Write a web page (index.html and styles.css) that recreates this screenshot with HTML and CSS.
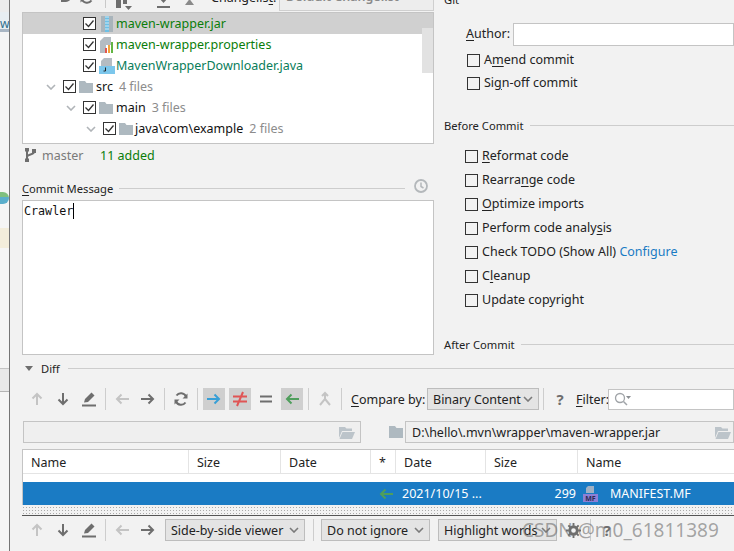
FILE: index.html
```html
<!DOCTYPE html>
<html lang="en">
<head>
    <meta charset="UTF-8">
    <meta name="viewport" content="width=device-width, initial-scale=1.0">
    <title>Commit Changes</title>
    <link rel="stylesheet" href="styles.css">
</head>
<body>
    <svg class="sprite">
        <symbol id="i-up" viewBox="0 0 16 16"><path d="M8 14V3M3.500 7.500 8 3l4.500 4.500" fill="none" stroke="currentColor" stroke-width="2"/></symbol>
        <symbol id="i-down" viewBox="0 0 16 16"><path d="M8 2v11M3.500 8.500 8 13l4.500-4.500" fill="none" stroke="currentColor" stroke-width="2"/></symbol>
        <symbol id="i-left" viewBox="0 0 16 16"><path d="M15 8H3M7.500 3.500 3 8l4.500 4.500" fill="none" stroke="currentColor" stroke-width="2"/></symbol>
        <symbol id="i-right" viewBox="0 0 16 16"><path d="M1 8h12M8.500 3.500 13 8l-4.500 4.500" fill="none" stroke="currentColor" stroke-width="2"/></symbol>
        <symbol id="i-edit" viewBox="0 0 16 16"><path d="M1 14.500h14" stroke="currentColor" stroke-width="2"/><path d="M3 11.500l1-3.500L10.500 1.500 13.500 4.500 7 11z" fill="currentColor"/></symbol>
        <symbol id="i-sync" viewBox="0 0 16 16"><path d="M13 5.500A5.500 5.500 0 0 0 3.500 4.500M3 10.500A5.500 5.500 0 0 0 12.500 11.500" fill="none" stroke="currentColor" stroke-width="2"/><path d="M14.500 7.500h-5l5-5zM1.500 8.500h5l-5 5z" fill="currentColor"/></symbol>
        <symbol id="i-merge" viewBox="0 0 16 16"><path d="M8 2v6L3 14M8 8l5 6M5 5l3-3 3 3" fill="none" stroke="currentColor" stroke-width="2"/></symbol>
        <symbol id="i-folder" viewBox="0 0 14 12"><path d="M0 0h6l1.500 2H14v10H0z" fill="currentColor"/></symbol>
        <symbol id="i-open" viewBox="0 0 16 13"><path d="M0 1h6l1.500 1.500H13V5H3L0 12z" fill="currentColor"/><path d="M3.500 6H16l-3 7H0.500z" fill="currentColor"/></symbol>
        <symbol id="i-chev" viewBox="0 0 10 6"><path d="M1 1l4 4 4-4" fill="none" stroke="currentColor" stroke-width="1.600"/></symbol>
        <symbol id="i-check" viewBox="0 0 13 13"><path d="M2.500 6.500l3 3 5-6" fill="none" stroke="#333" stroke-width="1.300"/></symbol>
    </svg>

    <div class="desktop">
        <div class="back-window">
            <div class="back-a"></div>
            <div class="back-tab">wr</div>
            <div class="back-b"></div>
            <div class="back-logo"></div>
            <div class="back-c"></div>
            <div class="back-note"></div>
            <div class="back-d"></div>
        </div>

        <div class="dialog">
            <div class="top-area">
                <div class="left-pane">
                    <div class="top-toolbar">
                        <svg class="top-icon blue" viewBox="0 0 16 16"><path d="M0 0h8v-4l8 8-6 6V8H0z" fill="currentColor" transform="translate(0 -2)"/></svg>
                        <svg class="top-icon undo" viewBox="0 0 16 16"><path d="M3 4h6a4 4 0 0 1 0 8H4" fill="none" stroke="currentColor" stroke-width="2"/></svg>
                        <svg class="top-icon redo" viewBox="0 0 16 16"><use href="#i-sync"/></svg>
                        <span class="top-sep"></span>
                        <svg class="top-icon group" viewBox="0 0 16 16"><path d="M0 0h5v9H0zM7 0h4v5H7zM9 7h7l-3.500 4z" fill="currentColor"/></svg>
                        <svg class="top-icon down" viewBox="0 0 16 16"><path d="M1 14h13" stroke="currentColor" stroke-width="2"/><path d="M3 5h9l-4.500 5z" fill="currentColor"/></svg>
                        <svg class="top-icon up" viewBox="0 0 16 16"><path d="M3 14h9L7.500 8z" fill="currentColor"/></svg>
                        <span class="changelist-label">Changelis<u>t</u>:</span>
                        <span class="changelist-combo">Default Changelist</span>
                    </div>

                    <div class="tree">
                        <div class="tree-row selected indent-file">
                            <span class="check on"><svg><use href="#i-check"/></svg></span>
                            <svg class="file-icon" viewBox="0 0 12 16"><rect width="12" height="16" fill="#a9b4bb"/><rect x="4" width="4" height="16" fill="#6cc0e6"/><path d="M4 1h4M4 4h4M4 7h4M4 10h4M4 13h4" stroke="#d5e7f0"/></svg>
                            <span class="added">maven-wrapper.jar</span>
                        </div>
                        <div class="tree-row indent-file">
                            <span class="check on"><svg><use href="#i-check"/></svg></span>
                            <svg class="file-icon" viewBox="0 0 14 16"><path d="M4 0h7v8H6v8H0V4z" fill="#b4bcc2"/><rect x="5" y="11" width="2" height="5" fill="#e2574c"/><rect x="8" y="8" width="2" height="8" fill="#f2a33c"/><rect x="11" y="5" width="2" height="11" fill="#62b543"/></svg>
                            <span class="added">maven-wrapper.properties</span>
                        </div>
                        <div class="tree-row indent-file">
                            <span class="check on"><svg><use href="#i-check"/></svg></span>
                            <svg class="file-icon java" viewBox="0 0 16 16"><path d="M5 0h8v8H2V3z" fill="#b4bcc2"/><rect y="8" width="16" height="8" fill="#7cc7ec"/><path d="M6.500 9.500v3.500H4.500" fill="none" stroke="#222"/></svg>
                            <span class="added-java">MavenWrapperDownloader.java</span>
                        </div>
                        <div class="tree-row indent-src">
                            <svg class="chev"><use href="#i-chev"/></svg>
                            <span class="check on"><svg><use href="#i-check"/></svg></span>
                            <svg class="folder"><use href="#i-folder"/></svg>
                            <span class="dir">src</span><span class="count">4 files</span>
                        </div>
                        <div class="tree-row indent-main">
                            <svg class="chev"><use href="#i-chev"/></svg>
                            <span class="check on"><svg><use href="#i-check"/></svg></span>
                            <svg class="folder"><use href="#i-folder"/></svg>
                            <span class="dir">main</span><span class="count">3 files</span>
                        </div>
                        <div class="tree-row indent-java">
                            <svg class="chev"><use href="#i-chev"/></svg>
                            <span class="check on"><svg><use href="#i-check"/></svg></span>
                            <svg class="folder"><use href="#i-folder"/></svg>
                            <span class="dir tight">java\com\example</span><span class="count">2 files</span>
                        </div>
                        <div class="tree-row indent-last">
                            <span class="check on"></span>
                        </div>
                        <div class="tree-thumb"></div>
                    </div>

                    <div class="status-row">
                        <svg class="branch" viewBox="0 0 11 14"><path d="M2 1v12M9 4c0 3-7 2-7 5" fill="none" stroke="#6e6e6e" stroke-width="2"/><rect x="0" y="0" width="4" height="3.500" fill="#6e6e6e"/><rect x="0" y="10.500" width="4" height="3.500" fill="#6e6e6e"/><rect x="7" y="1" width="4" height="4" fill="#6e6e6e"/></svg>
                        <span class="branch-name">master</span>
                        <span class="added-count">11 added</span>
                    </div>

                    <div class="message-head">
                        <span class="message-label"><u>C</u>ommit Message</span>
                        <span class="rule"></span>
                        <svg class="clock" viewBox="0 0 14 14"><circle cx="7" cy="7" r="6" fill="none" stroke="#b4b8bb" stroke-width="1.800"/><path d="M7 3.500V7.500l2.500 1.500" fill="none" stroke="#b4b8bb" stroke-width="1.500"/></svg>
                    </div>
                    <div class="message-box"><span class="message-text">Crawler</span><span class="caret"></span></div>
                </div>

                <div class="right-pane">
                    <div class="git-head">Git</div>
                    <div class="author-row">
                        <span class="author-label"><u>A</u>uthor:</span>
                        <span class="author-input"></span>
                    </div>
                    <label class="opt opt-git"><span class="check"></span><span>A<u>m</u>end commit</span></label>
                    <label class="opt opt-git"><span class="check"></span><span>Si<u>g</u>n-off commit</span></label>

                    <div class="section-head before"><span>Before Commit</span><span class="rule"></span></div>
                    <label class="opt"><span class="check"></span><span><u>R</u>eformat code</span></label>
                    <label class="opt"><span class="check"></span><span>Rearra<u>n</u>ge code</span></label>
                    <label class="opt"><span class="check"></span><span><u>O</u>ptimize imports</span></label>
                    <label class="opt"><span class="check"></span><span>Perform code analy<u>s</u>is</span></label>
                    <label class="opt"><span class="check"></span><span>Check TODO (Show All) <a class="link">Configure</a></span></label>
                    <label class="opt"><span class="check"></span><span>C<u>l</u>eanup</span></label>
                    <label class="opt"><span class="check"></span><span>Update copyright</span></label>

                    <div class="section-head after"><span>After Commit</span><span class="rule"></span></div>
                </div>
            </div>

            <div class="diff-head">
                <span class="triangle"></span>
                <span>Diff</span>
                <span class="rule"></span>
            </div>

            <div class="toolbar diff-toolbar">
                <span class="tool dim"><svg><use href="#i-up"/></svg></span>
                <span class="tool"><svg><use href="#i-down"/></svg></span>
                <span class="tool"><svg><use href="#i-edit"/></svg></span>
                <span class="sep"></span>
                <span class="tool dim"><svg><use href="#i-left"/></svg></span>
                <span class="tool"><svg><use href="#i-right"/></svg></span>
                <span class="sep"></span>
                <span class="tool"><svg><use href="#i-sync"/></svg></span>
                <span class="sep"></span>
                <span class="tool on c-blue"><svg><use href="#i-right"/></svg></span>
                <span class="tool on c-red"><svg viewBox="0 0 16 16"><path d="M1 5.500h14M1 10.500h14M11 1 5 15" fill="none" stroke="currentColor" stroke-width="2"/></svg></span>
                <span class="tool"><svg viewBox="0 0 16 16"><path d="M2 5.500h12M2 10.500h12" fill="none" stroke="currentColor" stroke-width="2"/></svg></span>
                <span class="tool on c-green"><svg><use href="#i-left"/></svg></span>
                <span class="sep"></span>
                <span class="tool dim"><svg><use href="#i-merge"/></svg></span>
                <span class="sep"></span>
                <span class="compare-label"><u>C</u>ompare by:</span>
                <span class="combo combo-compare">Binary Content<svg class="combo-arrow"><use href="#i-chev"/></svg></span>
                <span class="sep sep-compare"></span>
                <span class="help">?</span>
                <span class="filter-label"><u>F</u>ilter:</span>
                <span class="filter-input">
                    <svg class="search" viewBox="0 0 17 14"><circle cx="6" cy="6" r="4.500" fill="none" stroke="#a0a4a8" stroke-width="1.300"/><path d="M9.500 9.500 13 13" stroke="#a0a4a8" stroke-width="1.500"/><path d="M12 4h5l-2.500 3z" fill="#8a8e92"/></svg>
                </span>
            </div>

            <div class="path-row">
                <span class="path-field path-left"><svg class="open-icon"><use href="#i-open"/></svg></span>
                <svg class="path-folder"><use href="#i-folder"/></svg>
                <span class="path-field path-right">D:\hello\.mvn\wrapper\maven-wrapper.jar<svg class="open-icon"><use href="#i-open"/></svg></span>
            </div>

            <div class="file-table">
                <div class="table-head">
                    <span>Name</span><span>Size</span><span>Date</span><span>*</span><span>Date</span><span>Size</span><span>Name</span>
                </div>
                <div class="table-gap"></div>
                <div class="table-row">
                    <svg class="row-arrow"><use href="#i-left"/></svg>
                    <span class="row-date">2021/10/15 ...</span>
                    <span class="row-size">299</span>
                    <svg class="mf-icon" viewBox="0 0 15 16"><path d="M5 0h6v7H3V2z" fill="#9fb0c4"/><rect y="8" width="15" height="8" fill="#8d7fd6"/><text x="7.500" y="15" class="mf-text">MF</text></svg>
                    <span class="row-name">MANIFEST.MF</span>
                </div>
            </div>

            <div class="splitter"></div>

            <div class="toolbar bottom-toolbar">
                <span class="tool dim"><svg><use href="#i-up"/></svg></span>
                <span class="tool"><svg><use href="#i-down"/></svg></span>
                <span class="tool"><svg><use href="#i-edit"/></svg></span>
                <span class="sep"></span>
                <span class="tool dim"><svg><use href="#i-left"/></svg></span>
                <span class="tool"><svg><use href="#i-right"/></svg></span>
                <span class="combo combo-viewer">Side-by-side viewer<svg class="combo-arrow"><use href="#i-chev"/></svg></span>
                <span class="sep sep-combo"></span>
                <span class="combo combo-ignore">Do not ignore<svg class="combo-arrow"><use href="#i-chev"/></svg></span>
                <span class="combo combo-words">Highlight words<svg class="combo-arrow"><use href="#i-chev"/></svg></span>
                <svg class="gear" viewBox="0 0 16 16"><circle cx="8" cy="8" r="4" fill="none" stroke="currentColor" stroke-width="3"/><path d="M8 0v3M8 13v3M0 8h3M13 8h3M2.500 2.500l2 2M11.500 11.500l2 2M13.500 2.500l-2 2M4.500 11.500l-2 2" stroke="currentColor" stroke-width="2"/></svg>
                <span class="sep sep-gear"></span>
                <span class="help help-bottom">?</span>
            </div>
        </div>
        <div class="watermark">CSDN @m0_61811389</div>
    </div>
</body>
</html>
```

FILE: styles.css
```css
* {
    box-sizing: border-box;
}

body {
    margin: 0;
    font-family: "Noto Sans", "Open Sans", sans-serif;
    font-size: 12.500px;
    color: #222;
    background-color: #f2f2f2;
}

u {
    text-underline-offset: 2px;
}

.sprite {
    display: none;
}

.desktop {
    position: relative;
    display: flex;
    width: 734px;
    height: 551px;
    overflow: hidden;
}

/* window behind the dialog */
.back-window {
    width: 9px;
    flex-shrink: 0;
    display: flex;
    flex-direction: column;
    background-color: #f5f5f5;
}

.back-a {
    height: 12px;
    background-color: #ececec;
}

.back-tab {
    height: 17px;
    overflow: hidden;
    font-size: 12px;
    line-height: 23px;
    color: #2f6f8f;
    background-color: #e8eef2;
}

.back-b {
    height: 3px;
    margin-bottom: 160px;
    background-color: #a9b6c4;
}

.back-logo {
    height: 12px;
    border-radius: 0 6px 6px 0;
    background: linear-gradient(#7fbf7f 45%, #5aaecb 45%);
}

.back-c {
    height: 24px;
}

.back-note {
    height: 20px;
    background-color: #f3eddb;
}

.back-d {
    height: 24px;
    margin-top: 120px;
    border-top: 1px solid #c4c4c4;
    border-bottom: 1px solid #b4b4b4;
    background-color: #e8e8e8;
}

.dialog {
    flex: 1;
    min-width: 0;
    border-left: 1px solid #757575;
    background-color: #f2f2f2;
}

.top-area {
    display: flex;
    height: 356px;
}

.left-pane {
    width: 424px;
    padding-left: 12px;
    flex-shrink: 0;
}

.top-toolbar {
    position: relative;
    display: flex;
    height: 12px;
    overflow: hidden;
}

.top-icon {
    position: absolute;
    top: -11px;
    width: 16px;
    height: 16px;
    color: #6e6e6e;
}

.top-icon.blue { left: 4px; color: #389fd6; }
.top-icon.undo { left: 35px; }
.top-icon.redo { left: 57px; }
.top-icon.group { left: 94px; top: -1px; }
.top-icon.down { left: 134px; top: -7px; }
.top-icon.up { left: 160px; top: -9px; color: #8a8a8a; }

.top-sep {
    position: absolute;
    left: 83px;
    top: 0;
    width: 1px;
    height: 8px;
    background-color: #c9c9c9;
}

.changelist-label {
    position: absolute;
    left: 189px;
    top: -11px;
}

.changelist-combo {
    position: absolute;
    left: 257px;
    top: -14px;
    width: 155px;
    height: 25px;
    padding: 0 6px;
    line-height: 20px;
    font-weight: 600;
    color: #8a8a8a;
    border: 1px solid #cfcfcf;
    background-color: #ededed;
}

.tree {
    position: relative;
    height: 132px;
    overflow: hidden;
    border: 1px solid #c4c4c4;
    background-color: #fff;
}

.tree-row {
    display: flex;
    align-items: center;
    height: 21px;
    white-space: nowrap;
}

.tree-row.selected {
    background-color: #d0d0d0;
}

.indent-file { padding-left: 60px; }
.indent-src { padding-left: 23px; }
.indent-main { padding-left: 43px; }
.indent-java { padding-left: 63px; }
.indent-last { padding-left: 100px; }

.chev {
    width: 10px;
    height: 6px;
    margin-right: 7px;
    color: #b0b4b8;
}

.check {
    display: inline-block;
    flex-shrink: 0;
    width: 13px;
    height: 13px;
    border: 1px solid #333;
    background-color: transparent;
}

.check.on {
    background-color: #fff;
}

.check svg {
    display: block;
    width: 13px;
    height: 13px;
    margin: -1px;
}

.file-icon {
    width: 14px;
    height: 16px;
    margin-left: 4px;
    margin-right: 2px;
}

.file-icon.java {
    width: 16px;
    margin-left: 3px;
    margin-right: 1px;
}

.added {
    color: #0a7d0a;
}

.added-java {
    color: #0a7d5a;
}

.folder {
    width: 14px;
    height: 12px;
    margin-left: 3px;
    margin-right: 3px;
    color: #aeb9c0;
}

.dir {
    color: #111;
}

.dir.tight {
    margin-left: -1px;
}

.count {
    margin-left: 6px;
    color: #8c8c8c;
}

.tree-thumb {
    position: absolute;
    right: 0;
    top: 15px;
    width: 11px;
    height: 45px;
    background-color: #e2e2e2;
}

.status-row {
    display: flex;
    align-items: center;
    height: 22px;
    margin-bottom: 11px;
}

.branch {
    width: 11px;
    height: 14px;
    margin-left: 3px;
}

.branch-name {
    width: 40px;
    margin-left: 6px;
    color: #7a7a7a;
}

.added-count {
    margin-left: 18px;
    color: #0a7d0a;
}

.message-head {
    display: flex;
    align-items: center;
    height: 22px;
}

.rule {
    flex: 1;
    height: 1px;
    background-color: #cdcdcd;
}

.message-label {
    margin-right: 6px;
    font-size: 11.200px;
}

.clock {
    width: 14px;
    height: 14px;
    margin-left: 9px;
    margin-right: 6px;
    margin-top: -4px;
}

.message-box {
    display: flex;
    align-items: flex-start;
    height: 155px;
    margin-top: 1px;
    padding: 2px 0 0 1px;
    border: 1px solid #c4c4c4;
    background-color: #fff;
}

.message-text {
    font-family: "DejaVu Sans Mono", "Liberation Mono", monospace;
    font-size: 11.700px;
    line-height: 16px;
    color: #111;
}

.caret {
    width: 1px;
    height: 16px;
    background-color: #000;
}

.right-pane {
    flex: 1;
    min-width: 0;
    padding-left: 10px;
}

.git-head {
    height: 23px;
    margin-top: -9px;
    line-height: 18px;
    font-size: 11.200px;
}

.author-row {
    display: flex;
    align-items: center;
    height: 23px;
    padding-left: 22px;
    margin-bottom: 3px;
    margin-top: 9px;
}

.author-label {
    width: 47px;
    padding-bottom: 2px;
}

.author-input {
    flex: 1;
    height: 23px;
    border: 1px solid #c4c4c4;
    background-color: #fff;
}

.opt {
    display: flex;
    align-items: center;
    height: 24px;
    padding-left: 21px;
    white-space: nowrap;
}

.opt .check {
    margin-right: 4px;
}

.opt > span:last-child {
    padding-bottom: 2px;
}

.opt-git {
    height: 23px;
    padding-left: 23px;
}

.link {
    color: #1a7bc4;
}

.section-head {
    display: flex;
    align-items: center;
    gap: 6px;
    height: 20px;
    font-size: 11.200px;
}

.section-head.before {
    margin-top: 20px;
    margin-bottom: 9px;
}

.section-head.after {
    margin-top: 22px;
}

.diff-head {
    display: flex;
    align-items: center;
    height: 24px;
    padding-left: 15px;
    font-size: 11.200px;
}

.diff-head .rule {
    margin-left: 8px;
}

.triangle {
    width: 0;
    height: 0;
    margin-right: 8px;
    border-left: 4px solid transparent;
    border-right: 4px solid transparent;
    border-top: 5px solid #6e6e6e;
}

.toolbar {
    display: flex;
    align-items: center;
    padding-left: 14px;
    white-space: nowrap;
}

.diff-toolbar {
    height: 22px;
    margin-top: 8px;
}

.tool {
    display: flex;
    align-items: center;
    justify-content: center;
    width: 22px;
    height: 22px;
    margin: 0 2px;
    color: #6e6e6e;
}

.tool svg {
    width: 16px;
    height: 16px;
}

.tool.dim { color: #c4c4c4; }
.tool.on { background-color: #cfcfcf; }
.c-blue { color: #389fd6; }
.c-red { color: #e05555; }
.c-green { color: #4f9e5c; }

.sep {
    width: 1px;
    height: 22px;
    margin: 0 3px;
    background-color: #cdcdcd;
}

.compare-label {
    width: 76px;
    margin-left: 6px;
}

.combo {
    display: flex;
    align-items: center;
    justify-content: space-between;
    height: 22px;
    padding: 0 5px;
    color: #222;
    border: 1px solid #bdbdbd;
    background-color: #e4e4e4;
    flex-shrink: 0;
}

.combo-arrow {
    width: 10px;
    height: 6px;
    color: #7a7a7a;
}

.combo-compare { width: 112px; }
.sep-compare { margin-left: 4px; margin-right: 0; }

.help {
    width: 16px;
    margin-left: 8px;
    text-align: center;
    font-size: 15px;
    font-weight: 700;
    color: #6e6e6e;
}

.filter-label {
    width: 32px;
    margin-left: 8px;
}

.filter-input {
    flex: 1;
    display: flex;
    align-items: center;
    height: 21px;
    padding-left: 5px;
    border: 1px solid #c4c4c4;
    background-color: #fff;
}

.search {
    width: 17px;
    height: 14px;
}

.path-row {
    display: flex;
    align-items: center;
    height: 22px;
    margin-top: 11px;
    padding-left: 13px;
}

.path-field {
    display: flex;
    align-items: center;
    justify-content: space-between;
    height: 22px;
    padding: 0 6px;
    border: 1px solid #c4c4c4;
    background-color: #efefef;
    white-space: nowrap;
}

.path-left {
    width: 338px;
    justify-content: flex-end;
}

.path-folder {
    width: 14px;
    height: 12px;
    margin-left: 28px;
    margin-right: 2px;
    color: #aeb9c0;
}

.path-right {
    flex: 1;
    min-width: 0;
    overflow: hidden;
}

.open-icon {
    width: 16px;
    height: 13px;
    margin-right: -1px;
    color: #bcc4ca;
    flex-shrink: 0;
}

.path-right .open-icon {
    margin-right: -4px;
}

.file-table {
    height: 56px;
    margin-top: 6px;
    margin-left: 12px;
    border: 1px solid #c4c4c4;
    border-right: 0;
    border-bottom: 0;
    background-color: #fff;
}

.table-head {
    display: grid;
    grid-template-columns: 166px 92px 90px 25px 90px 92px 1fr;
    height: 24px;
    border-bottom: 1px solid #e4e4e4;
}

.table-head span {
    display: flex;
    align-items: center;
    padding-left: 8px;
    padding-top: 2px;
    border-right: 1px solid #e4e4e4;
}

.table-head span:last-child {
    border-right: 0;
}

.table-gap {
    height: 8px;
}

.table-row {
    display: flex;
    align-items: center;
    height: 23px;
    padding-left: 355px;
    color: #fff;
    background-color: #1a7bc4;
}

.row-arrow {
    width: 16px;
    height: 16px;
    color: #4f9e5c;
}

.row-date {
    width: 150px;
    margin-left: 8px;
}

.row-size {
    width: 24px;
    text-align: right;
}

.mf-icon {
    width: 15px;
    height: 16px;
    margin-left: 7px;
}

.mf-text {
    font-size: 7px;
    font-weight: 700;
    text-anchor: middle;
    fill: #2b2b55;
}

.row-name {
    margin-left: 12px;
}

.splitter {
    height: 10px;
    border-bottom: 1px solid #555;
    margin-left: 12px;
    margin-top: 1px;
    background-image: radial-gradient(#aaa 1px, transparent 1px);
    background-size: 3px 3px;
}

.bottom-toolbar {
    height: 22px;
    margin-top: 3px;
}

.combo-viewer {
    width: 140px;
    margin-left: 4px;
}

.sep-combo {
    margin-left: 8px;
    margin-right: 7px;
}

.combo-ignore {
    width: 109px;
}

.combo-words {
    width: 119px;
    margin-left: 8px;
}

.gear {
    width: 15px;
    height: 15px;
    margin-left: 9px;
    color: #6e6e6e;
}

.sep-gear {
    margin-left: 9px;
    margin-right: 0;
}

.help-bottom {
    margin-left: 8px;
}

.watermark {
    position: absolute;
    left: 522px;
    top: 518px;
    font-size: 19px;
    line-height: 25px;
    color: rgba(110, 110, 110, 0.6);
    white-space: nowrap;
}
```
